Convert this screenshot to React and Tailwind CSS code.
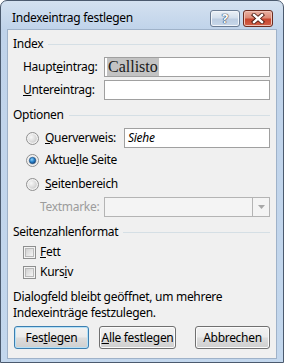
import React from "react";

function Radio({ checked }) {
  return (
    <svg width="13" height="13" viewBox="0 0 13 13" className="shrink-0">
      <defs>
        <radialGradient id="rg" cx="0.35" cy="0.35" r="0.8">
          <stop offset="0" stopColor="#f8f8f8" />
          <stop offset="1" stopColor="#c9c9c9" />
        </radialGradient>
        <radialGradient id="rb" cx="0.4" cy="0.35" r="0.7">
          <stop offset="0" stopColor="#8fd0f7" />
          <stop offset="0.5" stopColor="#2b86cf" />
          <stop offset="1" stopColor="#0d3f7a" />
        </radialGradient>
      </defs>
      <circle cx="6.5" cy="6.5" r="6" fill="#f2f2f2" stroke="#8f8f8f" />
      <circle cx="6.5" cy="6.5" r="4.3" fill="url(#rg)" />
      {checked && <circle cx="6.5" cy="6.5" r="3.2" fill="url(#rb)" stroke="#1b4a7a" strokeWidth="0.6" />}
    </svg>
  );
}

function Check() {
  return (
    <svg width="13" height="13" viewBox="0 0 13 13" className="shrink-0">
      <defs>
        <linearGradient id="cg" x1="0" y1="0" x2="1" y2="1">
          <stop offset="0" stopColor="#cfcfcf" />
          <stop offset="1" stopColor="#f7f7f7" />
        </linearGradient>
      </defs>
      <rect x="0.5" y="0.5" width="12" height="12" fill="#f4f4f4" stroke="#8e8f8f" />
      <rect x="2.5" y="2.5" width="8" height="8" fill="url(#cg)" stroke="#b9b9b9" />
    </svg>
  );
}

function Heading({ children }) {
  return (
    <div className="h-[16px] flex items-center pl-[5px] pr-[6px] gap-[5px]">
      <span className="leading-[16px]">{children}</span>
      <div className="flex-1 h-px bg-[#d5dfe5]" />
    </div>
  );
}

function Btn({ children, def, w }) {
  return (
    <div
      className={
        "h-[23px] rounded-[3px] border flex items-center justify-center bg-[linear-gradient(#f2f2f2_0%,#ebebeb_48%,#dddddd_52%,#cfcfcf_100%)] " +
        (def ? "border-[#3c7fb1] shadow-[inset_0_0_0_1px_#b6e1f7] " : "border-[#707070] shadow-[inset_0_0_0_1px_#fbfbfb] ") +
        w
      }
    >
      {children}
    </div>
  );
}

export default function App() {
  return (
    <div
      className="w-[284px] h-[363px] bg-white text-[12px] tracking-[-0.3px] text-black"
      style={{ fontFamily: '"Noto Sans", "Open Sans", sans-serif' }}
    >
      <div className="w-[284px] h-[363px] border border-[#4b5a6e] rounded-t-[7px] flex flex-col bg-[linear-gradient(#d4e1f0_0px,#c0d3ea_28px,#c3d7ed_100%)] overflow-hidden">
        {/* title bar */}
        <div className="h-[28px] flex items-start justify-between pl-[11px] pr-[10px]">
          <span className="pt-[9px] leading-[15px] text-[12px]">Indexeintrag festlegen</span>
          <div className="pt-[9px] flex gap-[3px]">
            <div className="w-[30px] h-[17px] rounded-[3px] border border-[#6a7c94] bg-[linear-gradient(#eaf0f7_0%,#d3dfed_45%,#bccde2_55%,#c8d8ea_100%)] shadow-[inset_0_0_0_1px_#f1f5fa] flex items-center justify-center">
              <span className="text-white font-bold text-[13px] leading-none [text-shadow:0_0_1px_#2a3a52,0_0_1px_#2a3a52,0_0_1px_#2a3a52]">?</span>
            </div>
            <div className="w-[30px] h-[17px] rounded-[3px] border border-[#6b2c20] bg-[linear-gradient(#eab2a4_0%,#dd8a76_45%,#c7452d_55%,#d2624a_100%)] shadow-[inset_0_0_0_1px_#f0c2b6] flex items-center justify-center">
              <svg width="14" height="11" viewBox="0 0 14 11">
                <path d="M3 2 L11 9 M11 2 L3 9" stroke="#4a1a10" strokeWidth="4.2" strokeLinecap="square" />
                <path d="M3 2 L11 9 M11 2 L3 9" stroke="#ffffff" strokeWidth="2.4" strokeLinecap="square" />
              </svg>
            </div>
          </div>
        </div>
        {/* frame body */}
        <div className="flex-1 px-[6px] pb-[3px] flex">
          <div className="flex-1 border border-[#9fb2c9] bg-[#f0f0f0] flex flex-col pt-[6px]">
            <Heading>Index</Heading>
            <div className="mt-[5px] h-[20px] flex items-center pl-[15px] pr-[6px]">
              <span className="w-[81px]">Haupt<u>e</u>intrag:</span>
              <div className="flex-1 h-[20px] border border-[#a0a0a0] bg-white flex items-center pl-[2px] overflow-hidden">
                <span
                  className="bg-[#c3c3c3] h-[18px] leading-[18px] px-[1px] text-[16px] tracking-normal text-[#1a1a1a]"
                  style={{ fontFamily: '"Liberation Serif", serif' }}
                >
                  Callisto
                </span>
              </div>
            </div>
            <div className="mt-[3px] h-[20px] flex items-center pl-[15px] pr-[6px]">
              <span className="w-[81px]"><u>U</u>ntereintrag:</span>
              <div className="flex-1 h-[20px] border border-[#a0a0a0] bg-white" />
            </div>

            <div className="mt-[7px]">
              <Heading>Optionen</Heading>
            </div>
            <div className="mt-[5px] h-[20px] flex items-center pl-[18px] pr-[6px]">
              <Radio />
              <span className="ml-[6px] w-[79px]"><u>Q</u>uerverweis:</span>
              <div className="flex-1 h-[20px] border border-[#a0a0a0] bg-white flex items-center pl-[3px]">
                <span className="italic">Siehe</span>
              </div>
            </div>
            <div className="mt-[2px] h-[20px] flex items-center pl-[18px]">
              <Radio checked />
              <span className="ml-[6px]">Aktue<u>l</u>le Seite</span>
            </div>
            <div className="mt-[4px] h-[20px] flex items-center pl-[18px]">
              <Radio />
              <span className="ml-[6px]"><u>S</u>eitenbereich</span>
            </div>
            <div className="mt-[3px] h-[20px] flex items-center pl-[32px] pr-[6px]">
              <span className="w-[64px] text-[#9c9c9c]">Textmarke:</span>
              <div className="flex-1 h-[20px] border border-[#b4b4b4] bg-[#f4f4f4] flex justify-end">
                <div className="w-[17px] h-full border-l border-[#b4b4b4] flex items-center justify-center">
                  <svg width="7" height="4" viewBox="0 0 7 4">
                    <path d="M0 0 H7 L3.5 4 Z" fill="#a8a8a8" />
                  </svg>
                </div>
              </div>
            </div>

            <div className="mt-[7px]">
              <Heading>Seitenzahlenformat</Heading>
            </div>
            <div className="mt-[3px] h-[18px] flex items-center pl-[15px]">
              <Check />
              <span className="ml-[4px]"><u>F</u>ett</span>
            </div>
            <div className="mt-[2px] h-[18px] flex items-center pl-[15px]">
              <Check />
              <span className="ml-[4px]">Kurs<u>i</u>v</span>
            </div>

            <div className="mt-[8px] pl-[5px] leading-[16px]">
              <div>Dialogfeld bleibt geöffnet, um mehrere</div>
              <div>Indexeinträge festzulegen.</div>
            </div>

            <div className="mt-[5px] flex pl-[6px] pr-[6px]">
              <Btn def w="w-[75px]">Fes<u>t</u>legen</Btn>
              <div className="w-[10px]" />
              <Btn w="w-[77px]"><u>A</u>lle festlegen</Btn>
              <div className="flex-1" />
              <Btn w="w-[75px]">Abbrechen</Btn>
            </div>
          </div>
        </div>
      </div>
    </div>
  );
}
